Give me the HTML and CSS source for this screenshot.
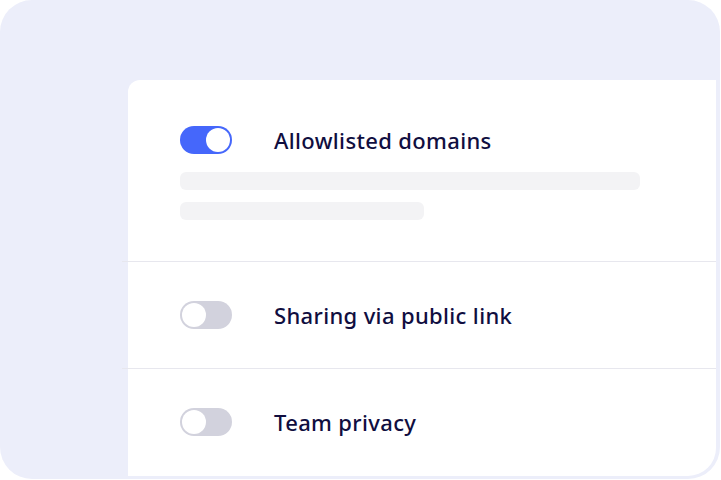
FILE: index.html
```html
<!DOCTYPE html>
<html>
<head>
<meta charset="utf-8">
<link rel="stylesheet" href="styles.css">
</head>
<body>
<div class="frame">
  <div class="card">
    <div class="row row-first">
      <div class="head">
        <span class="toggle on"><span class="knob"></span></span>
        <span class="label">Allowlisted domains</span>
      </div>
      <div class="skeleton long"></div>
      <div class="skeleton short"></div>
    </div>
    <div class="divider"></div>
    <div class="row">
      <div class="head">
        <span class="toggle"><span class="knob"></span></span>
        <span class="label">Sharing via public link</span>
      </div>
    </div>
    <div class="divider"></div>
    <div class="row">
      <div class="head">
        <span class="toggle"><span class="knob"></span></span>
        <span class="label">Team privacy</span>
      </div>
    </div>
  </div>
</div>
</body>
</html>
```
FILE: styles.css
```css
html, body {
  margin: 0;
  padding: 0;
  background: #ffffff;
}
.frame {
  width: 720px;
  height: 479px;
  box-sizing: border-box;
  background: #eceefa;
  border-radius: 32px;
  padding: 80px 4px 3px 128px;
  overflow: hidden;
}
.card {
  background: #ffffff;
  height: 100%;
  border-radius: 12px 0 28px 0;
  display: flex;
  flex-direction: column;
  font-family: "Noto Sans", "Open Sans", sans-serif;
}
.row {
  height: 106px;
  box-sizing: border-box;
  padding-left: 52px;
  display: flex;
  flex-direction: column;
  justify-content: center;
}
.row-first {
  height: 181px;
  justify-content: flex-start;
  padding-top: 46px;
}
.head {
  display: flex;
  align-items: center;
  gap: 42px;
  height: 28px;
}
.toggle {
  width: 52px;
  height: 28px;
  border-radius: 14px;
  background: #d2d2dd;
  box-sizing: border-box;
  padding: 2px;
  display: flex;
  flex: none;
}
.toggle.on {
  background: #4567fb;
  justify-content: flex-end;
}
.knob {
  width: 24px;
  height: 24px;
  border-radius: 50%;
  background: #ffffff;
}
.label {
  font-size: 22px;
  font-weight: 500;
  color: #100e3f;
  line-height: 26px;
  letter-spacing: 0.35px;
}
.skeleton {
  height: 18px;
  border-radius: 6px;
  background: #f3f3f5;
}
.skeleton.long {
  width: 460px;
  margin-top: 18px;
}
.skeleton.short {
  width: 244px;
  margin-top: 12px;
}
.divider {
  height: 1px;
  background: #e7e7ee;
  margin-left: -6px;
  flex: none;
}
```
